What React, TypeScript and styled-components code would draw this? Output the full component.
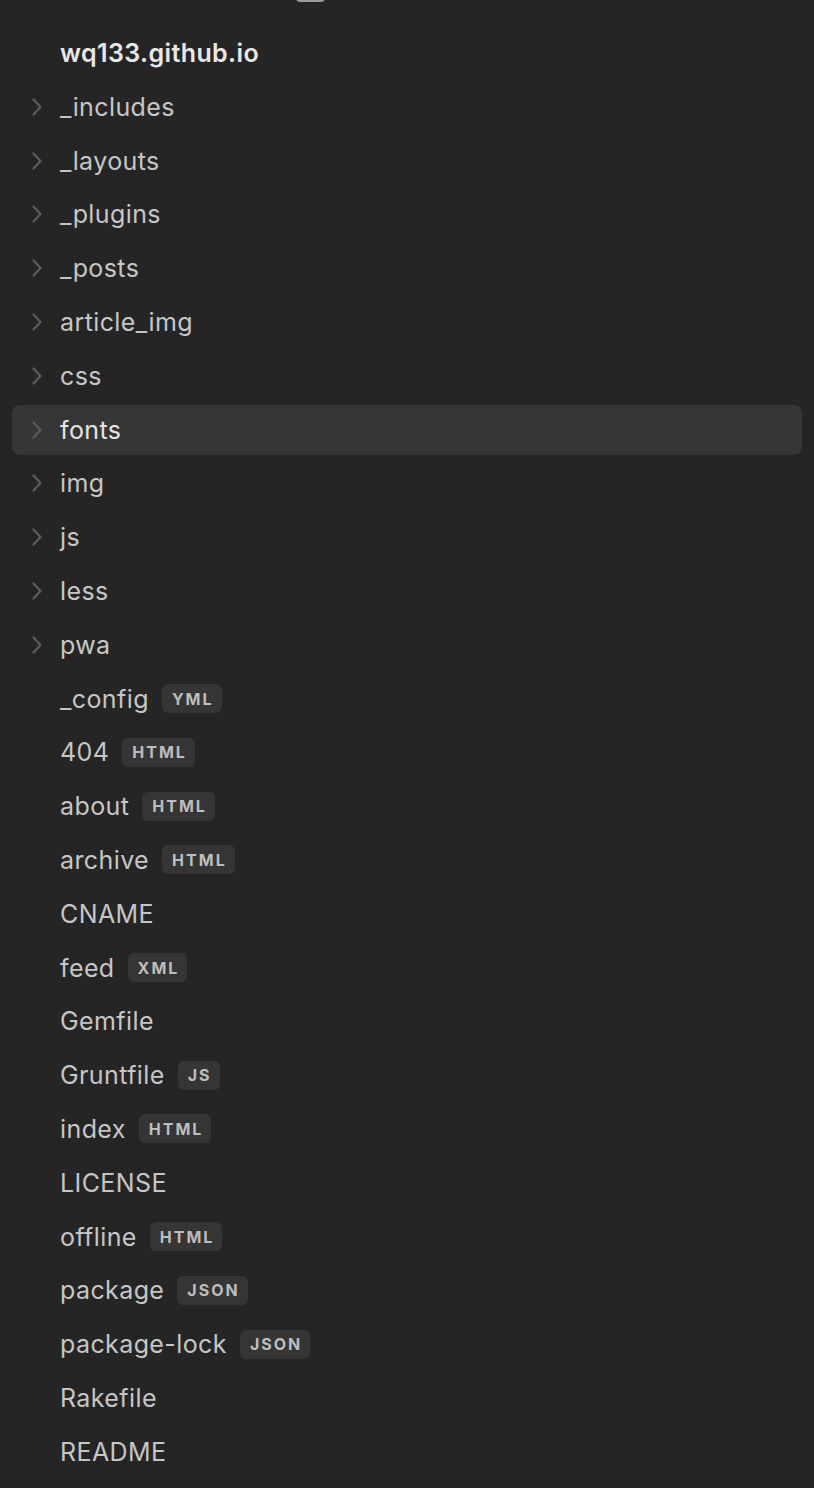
import React from "react";
import styled, { createGlobalStyle } from "styled-components";

const GlobalStyle = createGlobalStyle`
	html, body {
		margin: 0;
		padding: 0;
		background: #252525;
	}
	body {
		font-family: Inter, "Noto Sans", "Liberation Sans", sans-serif;
		-webkit-font-smoothing: antialiased;
	}
`;

const Sidebar = styled.div`
	position: relative;
	width: 814px;
	height: 1488px;
	background: #252525;
	overflow: hidden;
	box-sizing: border-box;
	padding: 28px 12px 0 12px;
`;

// little grabber peeking at the top edge
const Grabber = styled.div`
	position: absolute;
	top: -6px;
	left: 296px;
	width: 29px;
	height: 8px;
	border-radius: 4px;
	background: #9a9a9a;
`;

const List = styled.div`
	display: flex;
	flex-direction: column;
	gap: 3.8px;
`;

const Row = styled.div<{ selected?: boolean }>`
	display: flex;
	align-items: center;
	height: 50px;
	border-radius: 8px;
	background: ${props => (props.selected ? "#363636" : "transparent")};
`;

const Arrow = styled.span`
	display: flex;
	align-items: center;
	justify-content: center;
	width: 48px;
	height: 100%;
	flex-shrink: 0;
	padding-left: 2px;
	box-sizing: border-box;
	svg {
		display: block;
	}
`;

const Name = styled.span<{ root?: boolean; selected?: boolean }>`
	font-size: 25px;
	font-weight: ${props => (props.root ? 600 : 400)};
	letter-spacing: 0.4px;
	color: ${props =>
		props.root ? "#e8e8e8" : props.selected ? "#e4e4e4" : "#c6c6c6"};
	white-space: nowrap;
`;

const Badge = styled.span`
	display: inline-flex;
	align-items: center;
	height: 29px;
	padding: 0 8px 0 10px;
	margin-left: 13px;
	border-radius: 6px;
	background: #353535;
	color: #bdbdbd;
	font-size: 16px;
	font-weight: 700;
	letter-spacing: 2px;
`;

const Chevron = () => (
	<svg width="14" height="20" viewBox="0 0 14 20">
		<path
			d="M3.5 2.5 L10.5 10 L3.5 17.5"
			fill="none"
			stroke="#5c5c5c"
			strokeWidth="2.2"
			strokeLinecap="round"
			strokeLinejoin="round"
		/>
	</svg>
);

interface Entry {
	name: string;
	folder?: boolean;
	ext?: string;
}

const entries: Entry[] = [
	{ name: "_includes", folder: true },
	{ name: "_layouts", folder: true },
	{ name: "_plugins", folder: true },
	{ name: "_posts", folder: true },
	{ name: "article_img", folder: true },
	{ name: "css", folder: true },
	{ name: "fonts", folder: true },
	{ name: "img", folder: true },
	{ name: "js", folder: true },
	{ name: "less", folder: true },
	{ name: "pwa", folder: true },
	{ name: "_config", ext: "YML" },
	{ name: "404", ext: "HTML" },
	{ name: "about", ext: "HTML" },
	{ name: "archive", ext: "HTML" },
	{ name: "CNAME" },
	{ name: "feed", ext: "XML" },
	{ name: "Gemfile" },
	{ name: "Gruntfile", ext: "JS" },
	{ name: "index", ext: "HTML" },
	{ name: "LICENSE" },
	{ name: "offline", ext: "HTML" },
	{ name: "package", ext: "JSON" },
	{ name: "package-lock", ext: "JSON" },
	{ name: "Rakefile" },
	{ name: "README" },
];

const SELECTED = "fonts";

export default function App() {
	return (
		<>
			<GlobalStyle />
			<Sidebar>
				<Grabber />
				<List>
					<Row>
						<Arrow />
						<Name root>wq133.github.io</Name>
					</Row>
					{entries.map(e => {
						const selected = e.name === SELECTED;
						return (
							<Row key={e.name} selected={selected}>
								<Arrow>{e.folder && <Chevron />}</Arrow>
								<Name selected={selected}>{e.name}</Name>
								{e.ext && <Badge>{e.ext}</Badge>}
							</Row>
						);
					})}
				</List>
			</Sidebar>
		</>
	);
}
